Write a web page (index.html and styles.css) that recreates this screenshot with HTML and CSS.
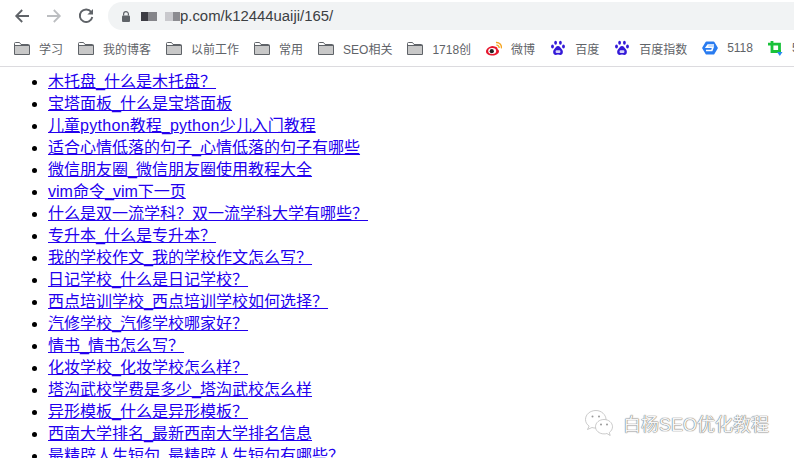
FILE: index.html
```html
<!DOCTYPE html>
<html lang="zh-CN">
<head>
<meta charset="utf-8">
<title>k12444uaiji</title>
<link rel="stylesheet" href="styles.css">
</head>
<body>

<svg class="defs" width="0" height="0">
  <symbol id="folder" viewBox="0 0 16 13">
    <path d="M.5 12.500V1.500a1 1 0 0 1 1-1h4l1.500 2h7.500a1 1 0 0 1 1 1v9z" fill="#fff" stroke="#5f6368"/>
    <path d="M1 4h14v8H1z" fill="#c8c8c8"/>
    <path d="M.5 3.500h15" stroke="#5f6368"/>
  </symbol>
  <symbol id="paw" viewBox="0 0 16 16">
    <g fill="#3319d8">
      <ellipse cx="5.600" cy="2.800" rx="1.400" ry="2"/>
      <ellipse cx="10.400" cy="2.800" rx="1.400" ry="2"/>
      <ellipse cx="2.500" cy="6.500" rx="1.400" ry="1.900"/>
      <ellipse cx="13.500" cy="6.500" rx="1.400" ry="1.900"/>
      <path d="M8 6C6 6 5.500 8 4 9.500S3 15 5.500 15c1 0 1.500-.4 2.500-.4s1.500.4 2.500.4c2.500 0 3-4 1.500-5.500S10 6 8 6z"/>
    </g>
    <rect x="5.600" y="10.200" width="4.800" height="2.800" rx="1" fill="#d8d4fa"/>
  </symbol>
</svg>

<!-- address bar -->
<div class="toolbar">
  <svg class="navicon" width="16" height="16" viewBox="0 0 16 16"><path d="M15 8H2.500M8.200 2L2.200 8l6 6" fill="none" stroke="#5f6368" stroke-width="1.800"/></svg>
  <svg class="navicon" width="16" height="16" viewBox="0 0 16 16"><path d="M1 8h12.500M7.800 2l6 6-6 6" fill="none" stroke="#bcbec1" stroke-width="1.800"/></svg>
  <svg class="navicon" width="16" height="16" viewBox="0 0 16 16"><path d="M13.200 4A6.300 6.300 0 1 0 14.300 9" fill="none" stroke="#5f6368" stroke-width="1.900"/><path d="M15 1v5.600H9.400z" fill="#5f6368"/></svg>
  <div class="omnibox">
    <svg class="lock" width="8" height="11" viewBox="0 0 8 11"><path d="M1.600 4.500V3a2.400 2.400 0 0 1 4.800 0v1.500" fill="none" stroke="#5f6368" stroke-width="1.200"/><rect y="4.500" width="8" height="6.500" rx="1" fill="#5f6368"/></svg>
    <span class="mask dark"></span><span class="mask mid"></span>
    <span class="mask light"></span><span class="mask mid2"></span>
    <span class="url">p.com/k12444uaiji/165/</span>
  </div>
</div>

<!-- bookmarks -->
<div class="bookmarks">
  <div class="bm"><svg class="folder"><use href="#folder"/></svg>学习</div>
  <div class="bm"><svg class="folder"><use href="#folder"/></svg>我的博客</div>
  <div class="bm"><svg class="folder"><use href="#folder"/></svg>以前工作</div>
  <div class="bm"><svg class="folder"><use href="#folder"/></svg>常用</div>
  <div class="bm"><svg class="folder"><use href="#folder"/></svg>SEO相关</div>
  <div class="bm"><svg class="folder"><use href="#folder"/></svg>1718创</div>
  <div class="bm"><svg class="favicon" viewBox="0 0 16 16"><path d="M6.500 6C3 6.500 0 9 0 11.500 0 14 3 15.500 6.500 15.500s6.500-2 6.500-4.300c0-1.500-1.500-1.800-1.500-2.500 .3-1.700-1.500-2.200-5-2.700z" fill="#e6162d"/><ellipse cx="6.200" cy="11" rx="4" ry="3" fill="#fff"/><circle cx="5.800" cy="11.200" r="2.100" fill="#222"/><path d="M10 2.500a5 5 0 0 1 5.400 5.800M10.400 5.200a2.400 2.400 0 0 1 2.700 2.800" fill="none" stroke="#f5a623" stroke-width="1.400"/></svg>微博</div>
  <div class="bm"><svg class="favicon"><use href="#paw"/></svg>百度</div>
  <div class="bm"><svg class="favicon"><use href="#paw"/></svg>百度指数</div>
  <div class="bm"><svg class="favicon" viewBox="0 0 16 16"><path d="M4.500 1.500h7a1 1 0 0 1 .9.500l3.300 5.500a1 1 0 0 1 0 1l-3.300 5.500a1 1 0 0 1-.9.500h-7a1 1 0 0 1-.9-.500L.3 8.500a1 1 0 0 1 0-1L3.600 2a1 1 0 0 1 .9-.500z" fill="#2a7cf0"/><path d="M12 5H6L4.500 7.200h6.500L9.800 10.500H4" fill="none" stroke="#fff" stroke-width="1.700"/></svg>5118</div>
  <div class="bm last"><svg class="favicon" viewBox="0 0 16 16"><path d="M4 1v10.500h9" fill="none" stroke="#19c23a" stroke-width="2.800"/><path d="M0 4.200h11.500V12" fill="none" stroke="#19c23a" stroke-width="2.800"/><path d="M9 12h5.500L11.800 16z" fill="#2a8cf0"/></svg>5</div>
</div>

<!-- page content -->
<ul class="links">
  <li><a href="#">木托盘<span class="us">_</span>什么是木托盘？</a></li>
  <li><a href="#">宝塔面板<span class="us">_</span>什么是宝塔面板</a></li>
  <li><a href="#">儿童<span class="py">python</span>教程<span class="us">_</span><span class="py">python</span>少儿入门教程</a></li>
  <li><a href="#">适合心情低落的句子<span class="us">_</span>心情低落的句子有哪些</a></li>
  <li><a href="#">微信朋友圈<span class="us">_</span>微信朋友圈使用教程大全</a></li>
  <li><a href="#">vim命令<span class="us">_</span>vim下一页</a></li>
  <li><a href="#">什么是双一流学科？双一流学科大学有哪些？</a></li>
  <li><a href="#">专升本<span class="us">_</span>什么是专升本？</a></li>
  <li><a href="#">我的学校作文<span class="us">_</span>我的学校作文怎么写？</a></li>
  <li><a href="#">日记学校<span class="us">_</span>什么是日记学校？</a></li>
  <li><a href="#">西点培训学校<span class="us">_</span>西点培训学校如何选择？</a></li>
  <li><a href="#">汽修学校<span class="us">_</span>汽修学校哪家好？</a></li>
  <li><a href="#">情书<span class="us">_</span>情书怎么写？</a></li>
  <li><a href="#">化妆学校<span class="us">_</span>化妆学校怎么样？</a></li>
  <li><a href="#">塔沟武校学费是多少<span class="us">_</span>塔沟武校怎么样</a></li>
  <li><a href="#">异形模板<span class="us">_</span>什么是异形模板？</a></li>
  <li><a href="#">西南大学排名<span class="us">_</span>最新西南大学排名信息</a></li>
  <li><a href="#">最精辟人生短句<span class="us">_</span>最精辟人生短句有哪些？</a></li>
</ul>

<!-- watermark -->
<div class="watermark">
  <svg class="wechat" width="30" height="26" viewBox="0 0 30 26"><g fill="#fff" stroke="#b5b5b5" stroke-width=".7"><path d="M12 .5C6 .5 1.500 4.500 1.500 9.500c0 2.800 1.400 5 3.600 6.600L3.500 19.500l4.500-2c1.300.4 2.600.6 4 .6 5.500 0 10-4 10-8.600S17.500.5 12 .5z"/><path d="M20 9.500c-4.700 0-8.500 3.200-8.500 7.200s3.800 7.200 8.500 7.200c1 0 2-.1 2.900-.4l3.300 2-.9-3c2-1.400 3.200-3.500 3.200-5.800 0-4-3.800-7.200-8.500-7.200z"/></g><g fill="#999"><circle cx="8.500" cy="6.500" r="1"/><circle cx="15" cy="6.500" r="1"/><circle cx="17" cy="14.500" r="1"/><circle cx="23" cy="14.500" r="1"/></g></svg>
  <span class="wmtext">白杨SEO优化教程</span>
</div>

</body>
</html>
```
FILE: styles.css
```css
html, body { height: 458px; overflow: hidden; }
body {
  margin: 0;
  position: relative;
  background: #fff;
  font-family: "Liberation Sans", "Noto Sans CJK SC", sans-serif;
}
.defs { position: absolute; }

.toolbar {
  height: 30px;
  display: flex;
  align-items: center;
  padding: 2px 0 0 14px;
  gap: 16px;
  box-sizing: border-box;
  overflow: hidden;
}
.navicon { flex: none; }
.omnibox {
  flex: none;
  width: 720px;
  height: 28px;
  margin-left: -2px;
  border-radius: 14px;
  background: #f1f3f4;
  display: flex;
  align-items: center;
  padding-left: 14px;
  font-size: 14.900px;
  color: #3c4043;
}
.lock { margin-right: 11px; }
.mask { height: 9px; display: block; }
.dark { width: 7px; background: #3d3d44; }
.mid { width: 9px; background: #85858a; margin-right: 8px; }
.light { width: 8px; background: #c9c9cd; }
.mid2 { width: 7px; background: #8b8b90; }
.url { white-space: nowrap; }

.bookmarks {
  height: 36px;
  display: flex;
  align-items: center;
  gap: 15px;
  padding-left: 14px;
  overflow: hidden;
  border-bottom: 1px solid #dcdbdf;
  font-size: 12px;
  color: #5f6368;
  white-space: nowrap;
}
.bm { display: flex; align-items: center; gap: 9px; flex: none; }
.bm.last { gap: 8px; }
.folder { width: 16px; height: 13px; }
.favicon { width: 16px; height: 16px; }

.links {
  margin: 4px 0 0;
  padding-left: 48px;
  font-size: 16px;
  line-height: 22px;
}
.links a { color: #2200ee; }
/* the reference's latin font runs a little different from Liberation */
.links .us { letter-spacing: -.9px; }
.links .py { letter-spacing: .3px; }

.watermark {
  position: absolute;
  right: 25px;
  top: 410px;
  display: flex;
  align-items: center;
  gap: 9px;
}
.wmtext {
  font-size: 18px;
  color: #f6f6f6;
  text-shadow: 0 0 1px #666, 0 0 1px #666;
}
```
